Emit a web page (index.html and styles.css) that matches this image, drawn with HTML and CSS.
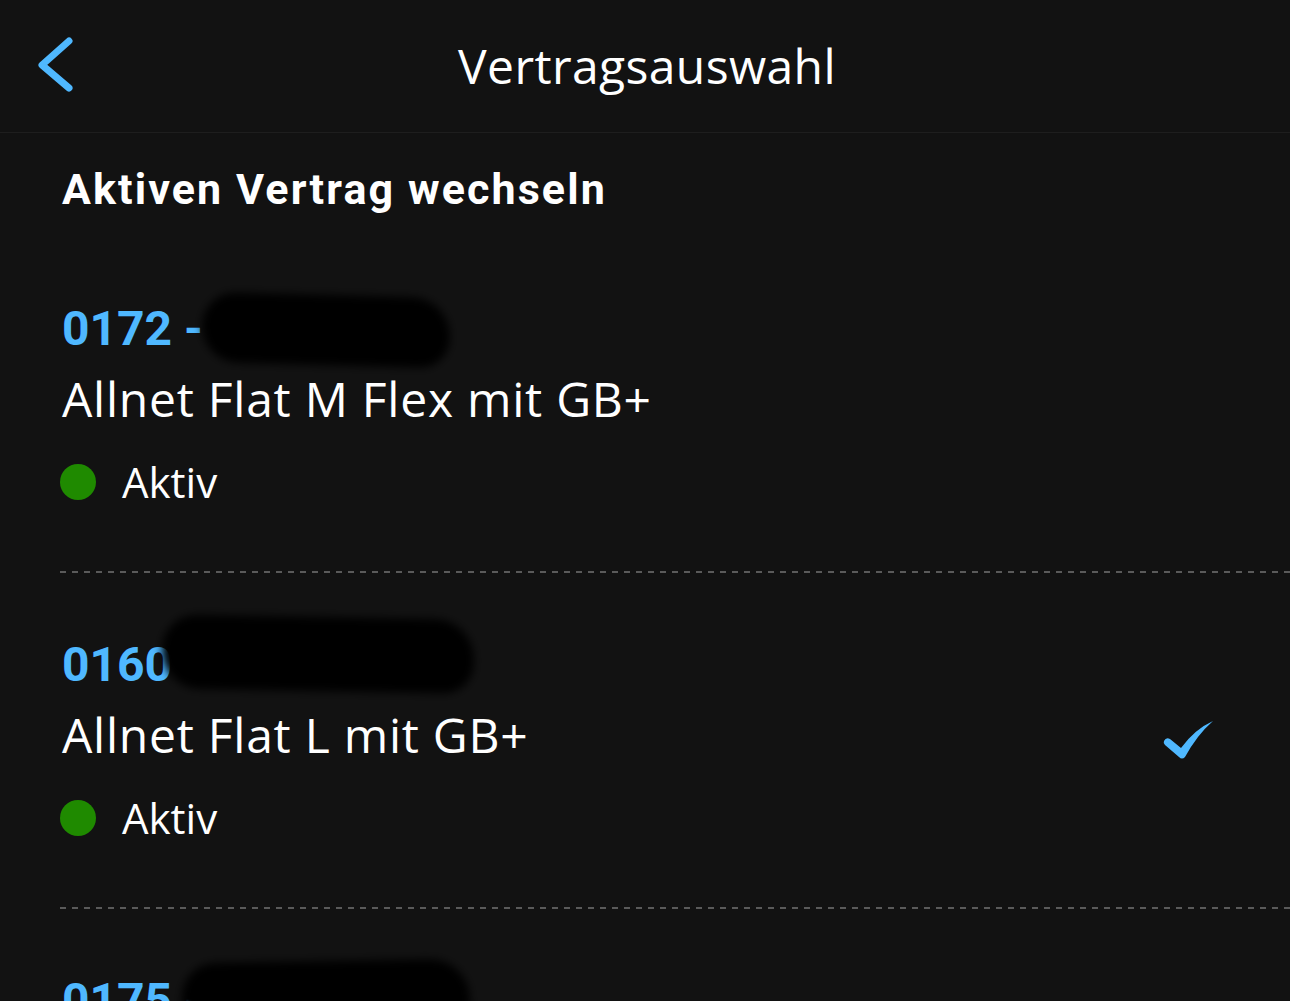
FILE: index.html
```html
<!DOCTYPE html>
<html lang="de">
<head>
    <meta charset="UTF-8">
    <meta name="viewport" content="width=device-width, initial-scale=1.0">
    <title>Vertragsauswahl</title>
    <link rel="stylesheet" href="styles.css">
</head>
<body>
    <div class="topbar">
        <button class="back" aria-label="Zurück">
            <svg width="40" height="64" viewBox="0 0 40 64">
                <path d="M31 6 L4 30 L31 53" fill="none" stroke="#4fb8ff" stroke-width="7" stroke-linecap="round" stroke-linejoin="round"/>
            </svg>
        </button>
        <div class="title">Vertragsauswahl</div>
    </div>

    <div class="content">
        <h2 class="section-title">Aktiven Vertrag wechseln</h2>

        <div class="contract first">
            <div class="number">0172 -<span class="redact r1"></span></div>
            <div class="tariff">Allnet Flat M Flex mit GB+</div>
            <div class="status"><span class="dot"></span>Aktiv</div>
        </div>
        <div class="divider"></div>

        <div class="contract">
            <div class="number">0160 -<span class="redact r2"></span></div>
            <div class="tariff">Allnet Flat L mit GB+</div>
            <div class="status"><span class="dot"></span>Aktiv</div>
            <svg class="check" width="52" height="42" viewBox="0 0 52 42">
                <path d="M1 22 Q3 18 7 20 L18 29 Q32 10 50 2 Q34 16 22 38 Q19 41 16 38 L2 26 Q0 24 1 22 Z" fill="#4fb8ff"/>
            </svg>
        </div>
        <div class="divider"></div>

        <div class="contract">
            <div class="number">0175 -<span class="redact r3"></span></div>
        </div>
    </div>
</body>
</html>
```

FILE: styles.css
```css
body {
    margin: 0;
    padding: 0;
    background-color: #121212;
    color: #fff;
    font-family: "Open Sans", "Noto Sans", sans-serif;
    overflow: hidden;
    height: 1001px;
}
.topbar {
    height: 132px;
    border-bottom: 1px solid #1e1e1e;
    display: flex;
    align-items: center;
    justify-content: center;
    position: relative;
}
.back {
    position: absolute;
    left: 38px;
    top: 35px;
    background: none;
    border: none;
    padding: 0;
    cursor: pointer;
}
.title {
    font-size: 48px;
    font-weight: 400;
    letter-spacing: 0.4px;
    margin-top: -2px;
    margin-left: 4px;
}
.content {
    padding-left: 62px;
}
.section-title {
    margin: 0;
    padding-top: 35px;
    font-family: Roboto, sans-serif;
    font-weight: 700;
    font-size: 43px;
    line-height: 1;
    letter-spacing: 2.1px;
}
.contract {
    position: relative;
    padding-top: 64px;
    padding-bottom: 61px;
}
.contract.first {
    padding-top: 90px;
}
.number {
    position: relative;
    font-family: Roboto, sans-serif;
    font-weight: 700;
    font-size: 48px;
    line-height: 56px;
    color: #4fb8ff;
}
.redact {
    position: absolute;
    background: #000;
    border-radius: 34px 40px 30px 38px;
    filter: blur(4px);
}
.r1 {
    left: 140px;
    top: -6px;
    width: 248px;
    height: 70px;
    transform: rotate(1.5deg);
}
.r2 {
    left: 100px;
    top: -20px;
    width: 312px;
    height: 74px;
    transform: rotate(1deg);
}
.r3 {
    left: 120px;
    top: -12px;
    width: 288px;
    height: 80px;
    transform: rotate(-1deg);
}
.tariff {
    font-size: 48px;
    font-weight: 400;
    line-height: 64px;
    margin-top: 10px;
    letter-spacing: 0.75px;
}
.status {
    display: flex;
    align-items: center;
    font-size: 42px;
    font-weight: 400;
    line-height: 56px;
    margin-top: 23px;
}
.dot {
    width: 36px;
    height: 36px;
    border-radius: 50%;
    background: #1f8a00;
    margin-left: -2px;
    margin-right: 26px;
}
.check {
    position: absolute;
    right: 75px;
    top: 146px;
}
.divider {
    height: 2px;
    margin-left: -2px;
    background-image: repeating-linear-gradient(90deg, #5a5a5a 0 6px, transparent 6px 12px);
}
```
